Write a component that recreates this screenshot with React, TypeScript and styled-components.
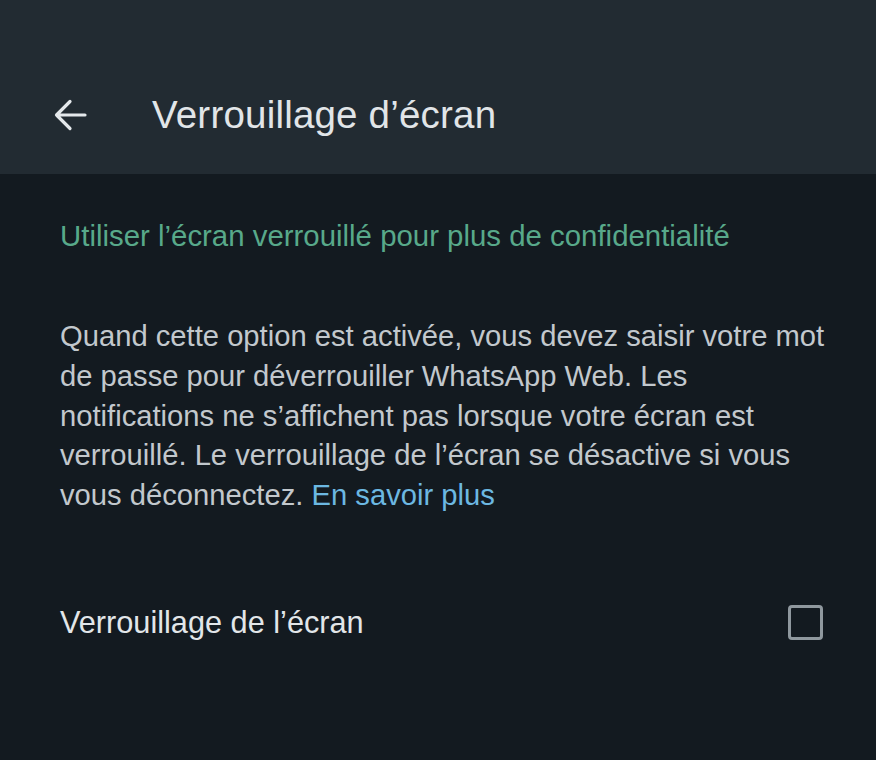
import * as React from 'react';
import styled, { createGlobalStyle } from 'styled-components';

const GlobalStyle = createGlobalStyle`
  html, body {
    margin: 0;
    padding: 0;
    background: #131a20;
  }
  body {
    font-family: "Liberation Sans", Arial, sans-serif;
    -webkit-font-smoothing: antialiased;
  }
`;

const BackArrow = () => (
  <svg width="34" height="34" viewBox="0 0 34 34" fill="none">
    <path
      d="M32 17H3.5M17 3.5L3.5 17L17 30.5"
      stroke="#e4e8eb"
      strokeWidth="3.2"
      strokeLinecap="round"
      strokeLinejoin="round"
    />
  </svg>
);

const App = () => {
  const [locked, setLocked] = React.useState(false);
  return (
    <Page>
      <GlobalStyle />
      <Header>
        <BackButton aria-label="Retour">
          <BackArrow />
        </BackButton>
        <Title>Verrouillage d’écran</Title>
      </Header>
      <Content>
        <Section>Utiliser l’écran verrouillé pour plus de confidentialité</Section>
        <Description>
          Quand cette option est activée, vous devez saisir votre mot de passe pour déverrouiller
          WhatsApp Web. Les notifications ne s’affichent pas lorsque votre écran est verrouillé. Le
          verrouillage de l’écran se désactive si vous vous déconnectez.{' '}
          <MoreLink href="#">En savoir plus</MoreLink>
        </Description>
        <OptionRow onClick={() => setLocked(!locked)}>
          <OptionLabel>Verrouillage de l’écran</OptionLabel>
          <Checkbox checked={locked} />
        </OptionRow>
      </Content>
    </Page>
  );
};

const Page = styled.div`
  min-height: 100vh;
  background: #131a20;
`;
const Header = styled.header`
  box-sizing: border-box;
  height: 174px;
  padding: 56px 0 0 53px;
  display: flex;
  align-items: center;
  background: #222b32;
`;
const BackButton = styled.button`
  display: flex;
  padding: 0;
  margin-right: 65px;
  border: none;
  background: none;
  cursor: pointer;
`;
const Title = styled.h1`
  margin: 0;
  font-size: 38.5px;
  font-weight: 400;
  color: #e1e5e8;
  letter-spacing: 0.2px;
`;
const Content = styled.main`
  padding: 42px 52px 0 60px;
`;
const Section = styled.p`
  margin: 0;
  font-size: 29.4px;
  line-height: 40px;
  color: #58a98a;
`;
const Description = styled.p`
  margin: 61px -14px 0 0;
  font-size: 29.2px;
  line-height: 39.8px;
  color: #c2c8cd;
`;
const MoreLink = styled.a`
  color: #6cb8e2;
  text-decoration: none;
`;
const OptionRow = styled.div`
  margin-top: 87px;
  height: 40px;
  display: flex;
  align-items: center;
  justify-content: space-between;
  cursor: pointer;
`;
const OptionLabel = styled.span`
  font-size: 30.7px;
  color: #e2e6e9;
`;
const Checkbox = styled.span<{ checked: boolean }>`
  box-sizing: border-box;
  width: 35px;
  height: 35px;
  margin-right: 1px;
  border: 3.5px solid ${({ checked }) => (checked ? '#00a884' : '#8f989e')};
  border-radius: 4px;
  background: ${({ checked }) => (checked ? '#00a884' : 'transparent')};
`;

export default App;
